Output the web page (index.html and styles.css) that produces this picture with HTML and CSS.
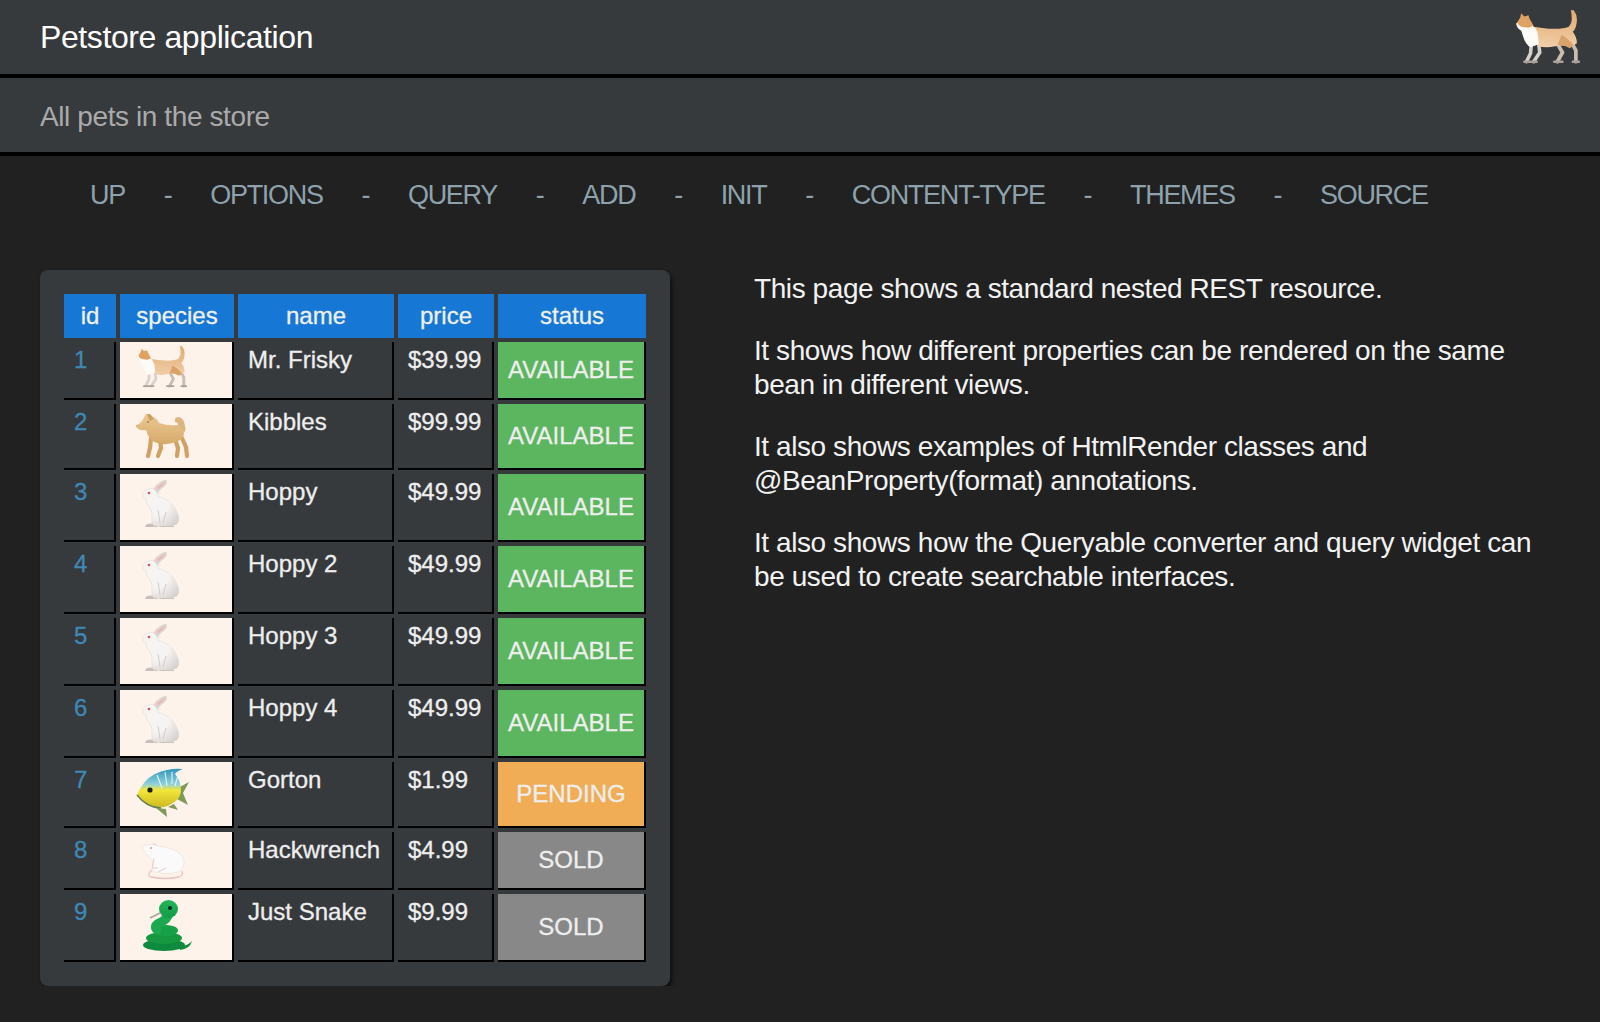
FILE: index.html
```html
<!DOCTYPE html>
<html lang="en">
<head>
  <meta charset="UTF-8">
  <title>Petstore application</title>
  <link rel="stylesheet" href="styles.css">
</head>
<body>
  <svg class="defs" width="0" height="0">
    <defs>
      <filter id="soft"><feGaussianBlur stdDeviation="0.55"/></filter>
      <linearGradient id="catFur" x1="0" y1="0" x2="0" y2="1">
        <stop offset="0" stop-color="#e3a970"/>
        <stop offset="1" stop-color="#f0cfa9"/>
      </linearGradient>
      <linearGradient id="dogFur" x1="0" y1="0" x2="0" y2="1">
        <stop offset="0" stop-color="#ecc994"/>
        <stop offset="1" stop-color="#d6a96a"/>
      </linearGradient>
      <linearGradient id="fishBody" x1="0" y1="0" x2="0" y2="1">
        <stop offset="0" stop-color="#2f96bd"/>
        <stop offset="0.4" stop-color="#8fd2dc"/>
        <stop offset="0.55" stop-color="#f3e63a"/>
        <stop offset="1" stop-color="#cdb922"/>
      </linearGradient>
      <linearGradient id="snakeSkin" x1="0" y1="0" x2="0" y2="1">
        <stop offset="0" stop-color="#24b65a"/>
        <stop offset="1" stop-color="#129a47"/>
      </linearGradient>
      <radialGradient id="rabbitFur" cx="0.35" cy="0.35" r="0.8">
        <stop offset="0.5" stop-color="#f6f4f3"/>
        <stop offset="1" stop-color="#d6d2d0"/>
      </radialGradient>

      <symbol id="cat" viewBox="0 0 64 52">
        <g filter="url(#soft)">
          <path d="M43 34l4 7-5 9M55 30l5 9 0 11" fill="none" stroke="#c9bcb1" stroke-width="3.6" stroke-linecap="round"/>
          <path d="M17 32l-1 10-4 8M24 33l1 8-6 9" fill="none" stroke="#d6d1cd" stroke-width="3.4" stroke-linecap="round"/>
          <path d="M47 50h-8M63 50h-6M15 50h-5M22 50h-6" fill="none" stroke="#a8a09a" stroke-width="2.4" stroke-linecap="round"/>
          <path d="M14 15q14 3 26 3q8 0 13-2q3-3 3-8t-1-8h3q3 4 3 9q0 8-4 12q4 5 4 11l-6 4q-8-3-15-1q-9 2-16 0q-6-4-10-20z" fill="url(#catFur)"/>
          <path d="M46 24q6 3 12 10l-4 3q-6-4-12-3z" fill="#d9a26a"/>
          <path d="M2 13l4-3 4 2 8 3q4 3 5 8l1 10-8 3q-5-3-7-10l-2-6q-4-2-5-7z" fill="#fdfbf8"/>
          <path d="M3 12l3-5 1-4 3 3 4-1 1 3 4 7-5 2-7-1q-3-1-4-4z" fill="#e0a264"/>
        </g>
      </symbol>

      <symbol id="rabbit" viewBox="0 0 112 66">
        <g filter="url(#soft)">
          <path d="M27 50l-2 3h13l-1-4zM41 49l-2 4h15l-3-5z" fill="#c9bdb8"/>
          <path d="M32 18q4-9 12-12q3-1 3 2q-1 4-6 7l-5 6z" fill="#ded5d1"/>
          <path d="M36 15q4-5 9-7.5q-1 3.500-5 6.500z" fill="#e6b9b2"/>
          <path d="M22 21q2-5 8-7q6 0 8 8q12 3 18 14q5 9 1 14q-3 2-11 2h-12q-3-2-2-8q1-6-2-10q-4-4-4-9q-4-1-4-4z" fill="url(#rabbitFur)" stroke="#ddd6d2" stroke-width="0.5"/>
          <path d="M38 36l2 13M46 38l-3 11" stroke="#d2cdca" stroke-width="1" fill="none"/>
          <circle cx="29" cy="19" r="1.3" fill="#dc4f5c"/>
        </g>
      </symbol>
    </defs>
  </svg>

  <header class="page-title">
    <h1>Petstore application</h1>
    <svg class="logo" width="66" height="54"><use href="#cat" width="66" height="54"/></svg>
  </header>
  <div class="page-sub">All pets in the store</div>

  <nav class="links">
    <a href="#">UP</a><span>-</span>
    <a href="#">OPTIONS</a><span>-</span>
    <a href="#">QUERY</a><span>-</span>
    <a href="#">ADD</a><span>-</span>
    <a href="#">INIT</a><span>-</span>
    <a href="#">CONTENT-TYPE</a><span>-</span>
    <a href="#">THEMES</a><span>-</span>
    <a href="#">SOURCE</a>
  </nav>

  <main class="content">
    <section class="pets-card">
      <table class="pets">
        <thead>
          <tr>
            <th class="col-id">id</th>
            <th class="col-species">species</th>
            <th class="col-name">name</th>
            <th class="col-price">price</th>
            <th class="col-status">status</th>
          </tr>
        </thead>
        <tbody>
          <tr>
            <td><a href="#">1</a></td>
            <td class="species">
              <svg class="pet" width="112" height="56" viewBox="0 0 112 56"><use href="#cat" x="16" y="4" width="51" height="42"/></svg>
            </td>
            <td>Mr. Frisky</td>
            <td>$39.99</td>
            <td class="status available">AVAILABLE</td>
          </tr>
          <tr>
            <td><a href="#">2</a></td>
            <td class="species">
              <svg class="pet" width="112" height="64" viewBox="0 0 112 64">
                <g filter="url(#soft)">
                  <path d="M31 34l-1 10-2 8M40 35l1 9-3 8M55 35l3 9-1 8M61 32l5 11 1 9" fill="none" stroke="#cfa264" stroke-width="4.2" stroke-linecap="round"/>
                  <path d="M61 31q6-3 4-9q-1-8-6-9q-5 0-4 5q3 0 3 3t-3 5z" fill="#dcb47c"/>
                  <path d="M26 10l4 0 3 3q4 1 6 6q9 3 18 2q6 2 7 7q0 7-6 9q-8 4-16 3q-8-1-12-5q-3-5-4-9q-6 1-9-2q-2-2-1-3q4-1 6-4z" fill="url(#dogFur)"/>
                  <path d="M27 10l3 0 4 5-4 2q-2-3-3-7z" fill="#cf9f60"/>
                  <circle cx="28" cy="18" r="0.8" fill="#7a5730"/>
                </g>
              </svg>
            </td>
            <td>Kibbles</td>
            <td>$99.99</td>
            <td class="status available">AVAILABLE</td>
          </tr>
          <tr>
            <td><a href="#">3</a></td>
            <td class="species"><svg class="pet" width="112" height="66"><use href="#rabbit" width="112" height="66"/></svg></td>
            <td>Hoppy</td>
            <td>$49.99</td>
            <td class="status available">AVAILABLE</td>
          </tr>
          <tr>
            <td><a href="#">4</a></td>
            <td class="species"><svg class="pet" width="112" height="66"><use href="#rabbit" width="112" height="66"/></svg></td>
            <td>Hoppy 2</td>
            <td>$49.99</td>
            <td class="status available">AVAILABLE</td>
          </tr>
          <tr>
            <td><a href="#">5</a></td>
            <td class="species"><svg class="pet" width="112" height="66"><use href="#rabbit" width="112" height="66"/></svg></td>
            <td>Hoppy 3</td>
            <td>$49.99</td>
            <td class="status available">AVAILABLE</td>
          </tr>
          <tr>
            <td><a href="#">6</a></td>
            <td class="species"><svg class="pet" width="112" height="66"><use href="#rabbit" width="112" height="66"/></svg></td>
            <td>Hoppy 4</td>
            <td>$49.99</td>
            <td class="status available">AVAILABLE</td>
          </tr>
          <tr>
            <td><a href="#">7</a></td>
            <td class="species">
              <svg class="pet" width="112" height="64" viewBox="0 0 112 64">
                <g filter="url(#soft)">
                  <path d="M58 26l11-6-6 11 5 12-11-6zM36 46l11 9-1-8zM48 45l10 3-4-6z" fill="#7f9a58"/>
                  <path d="M17 33q6-15 18-21q6-3 12-4q8-2 16-1q-6 2-8 5q6 7 6 17q-1 8-8 12q-9 6-19 4q-10-2-17-12z" fill="url(#fishBody)"/>
                  <path d="M17 33q10 13 24 13" stroke="#5f7f52" stroke-width="1.4" fill="none"/>
                  <path d="M37 13l5 13M45 10l2 14M52 10l0 12M58 13l-3 11" stroke="#e6f6f6" stroke-width="1.1" fill="none"/>
                  <circle cx="30" cy="28" r="2.6" fill="#1c1c14"/>
                </g>
              </svg>
            </td>
            <td>Gorton</td>
            <td>$1.99</td>
            <td class="status pending">PENDING</td>
          </tr>
          <tr>
            <td><a href="#">8</a></td>
            <td class="species">
              <svg class="pet" width="112" height="56" viewBox="0 0 112 56">
                <g filter="url(#soft)">
                  <path d="M32 38q-6 5-1 7q14 3 28 0q5-2 3-6" fill="none" stroke="#e8c3bf" stroke-width="1.3"/>
                  <path d="M22 15q4-3 8-2l3-1q3 0 4 2q8 0 15 3q10 4 12 11q1 8-6 12q-10 3-24 0l-2-4q2-4 1-6q-1-3-4-5q-4-3-7-10z" fill="#fbfafa" stroke="#eadbd8" stroke-width="0.6"/>
                  <path d="M33 12q3 0 4 2M34 26q-1 6-2 10h6M46 36l-8 4" fill="none" stroke="#e6c6c3" stroke-width="0.9"/>
                  <circle cx="31" cy="16" r="0.9" fill="#e08a92"/>
                </g>
              </svg>
            </td>
            <td>Hackwrench</td>
            <td>$4.99</td>
            <td class="status sold">SOLD</td>
          </tr>
          <tr>
            <td><a href="#">9</a></td>
            <td class="species">
              <svg class="pet" width="112" height="66" viewBox="0 0 112 66">
                <g filter="url(#soft)">
                  <path d="M40 19l-10 5" stroke="#a9a096" stroke-width="1.4" fill="none"/>
                  <path d="M60 52q8 0 12-5q-2 8-12 9z" fill="#14903f"/>
                  <ellipse cx="44" cy="51" rx="21" ry="6" fill="#0f8a3c"/>
                  <ellipse cx="44" cy="44" rx="18" ry="6" fill="#13983f"/>
                  <ellipse cx="46" cy="36.500" rx="12" ry="5.500" fill="#16a148"/>
                  <path d="M50 17q-2 9-11 12q-6 3-2 7" fill="none" stroke="#1aa850" stroke-width="9" stroke-linecap="round"/>
                  <ellipse cx="48.500" cy="15" rx="9.500" ry="9" fill="url(#snakeSkin)"/>
                  <circle cx="50" cy="14" r="2" fill="#10281a"/>
                </g>
              </svg>
            </td>
            <td>Just Snake</td>
            <td>$9.99</td>
            <td class="status sold">SOLD</td>
          </tr>
        </tbody>
      </table>
    </section>

    <aside class="about">
      <p>This page shows a standard nested REST resource.</p>
      <p>It shows how different properties can be rendered on the same bean in different views.</p>
      <p>It also shows examples of HtmlRender classes and @BeanProperty(format) annotations.</p>
      <p>It also shows how the Queryable converter and query widget can be used to create searchable interfaces.</p>
    </aside>
  </main>
</body>
</html>
```

FILE: styles.css
```css
body {
  font-family: "Liberation Sans", Arial, sans-serif;
  margin: 0;
  background-color: #212121;
  color: #eeeeee;
}

a {
  text-decoration: none;
}

.defs {
  display: block;
  height: 0;
}

.page-title {
  display: flex;
  align-items: center;
  justify-content: space-between;
  height: 74px;
  padding: 0 20px 0 40px;
  background-color: #373a3d;
  border-bottom: 4px solid #000000;
}

.page-title h1 {
  margin: 0;
  font-size: 32px;
  font-weight: normal;
  letter-spacing: -0.4px;
  color: #ffffff;
}

.logo {
  display: block;
  filter: blur(0.5px);
}

.page-sub {
  height: 70px;
  padding: 3px 0 1px 40px;
  line-height: 72px;
  font-size: 28px;
  letter-spacing: -0.4px;
  color: #aaaaaa;
  background-color: #373a3d;
  border-bottom: 4px solid #000000;
}

.links {
  display: flex;
  align-items: center;
  gap: 38.8px;
  height: 78px;
  padding-left: 90px;
  font-size: 27px;
  letter-spacing: -1.3px;
  color: #8ea2ad;
}

.links a {
  color: #8ea2ad;
}

.content {
  display: flex;
  align-items: flex-start;
  margin-top: 36px;
  padding: 0 0 0 40px;
}

.pets-card {
  flex: none;
  padding: 20px;
  background-color: #373a3d;
  border-radius: 8px;
  box-shadow: 2px 3px 4px rgba(0, 0, 0, 0.6);
}

.pets {
  table-layout: fixed;
  width: 590px;
  border-collapse: separate;
  border-spacing: 4px;
  font-size: 24px;
  -webkit-text-stroke: 0.3px;
}

.pets th {
  height: 44px;
  padding: 0;
  font-weight: normal;
  color: #f0f0f0;
  background-color: #1678d4;
}

.col-id { width: 52px; }
.col-species { width: 114px; }
.col-name { width: 156px; }
.col-price { width: 96px; }
.col-status { width: 148px; }

.pets td {
  padding: 4px 10px 8px;
  line-height: 28px;
  vertical-align: top;
  border-right: 2px solid #000000;
  border-bottom: 2px solid #000000;
}

.pets td a {
  color: #3f88b5;
}

.pets td.species {
  padding: 0;
  background-color: #fdf3eb;
}

.pet {
  display: block;
}

.pets td.status {
  padding: 0 0 1px;
  text-align: center;
  vertical-align: middle;
}

.available {
  background-color: #5cb55f;
}

.pending {
  background-color: #f0ad56;
}

.sold {
  background-color: #888888;
}

.about {
  width: 795px;
  margin-left: 84px;
  padding-top: 2px;
  font-size: 28px;
  line-height: 34px;
  letter-spacing: -0.42px;
  color: #f2f2f2;
}

.about p {
  margin: 0 0 28px;
}
```
